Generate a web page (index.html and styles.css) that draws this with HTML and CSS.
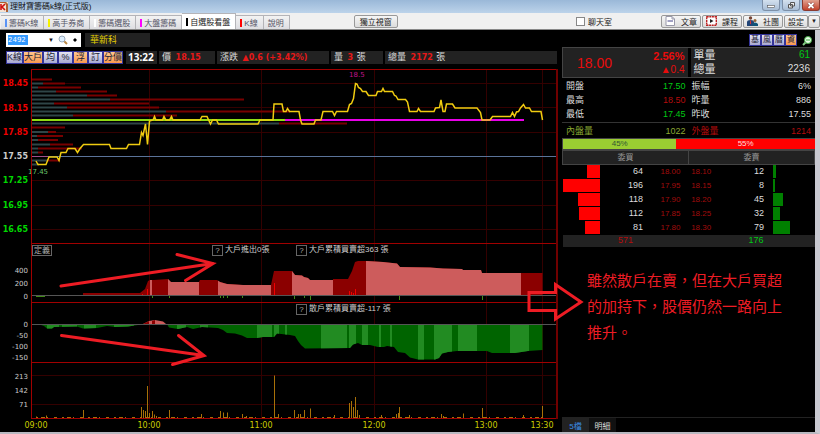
FILE: index.html
```
<!DOCTYPE html>
<html lang="zh-Hant">
<head>
    <meta charset="UTF-8">
    <meta name="viewport" content="width=device-width, initial-scale=1.0">
    <title>理財寶籌碼k線(正式版)</title>
    <link rel="stylesheet" href="styles.css">
</head>
<body>
    <header class="titlebar">
        <svg class="app-icon" viewBox="0 0 8 10"><rect width="8" height="10" fill="#f4e4d4"/><path d="M0 0H6L8 2V10H6V3L5 1H0z" fill="#b06030"/><path d="M1 2V8M5 2L2 5L5 8" stroke="#d01010" stroke-width="1.6" fill="none"/></svg>
        <h1>理財寶籌碼k線(正式版)</h1>
        <div class="window-buttons">
            <button aria-label="最小化"><svg viewBox="0 0 16 10"><rect x="4.5" y="5.5" width="7" height="2" fill="#fff" stroke="#555" stroke-width=".6"/></svg></button>
            <button aria-label="還原"><svg viewBox="0 0 16 10"><path d="M7.5 2.500H11.500V6H7.500zM5.500 4.500H9.500V8H5.500z" fill="#eee" stroke="#555"/></svg></button>
            <button class="close" aria-label="關閉"><svg viewBox="0 0 16 10"><path d="M5.500 3L10.500 8M10.500 3L5.500 8" stroke="#733" stroke-width="3"/><path d="M5.500 3L10.500 8M10.500 3L5.500 8" stroke="#fff" stroke-width="1.800"/></svg></button>
        </div>
    </header>

    <nav class="tabbar">
        <button class="tab"><i class="mark blue"></i>籌碼K線</button>
        <button class="tab"><i class="mark yellow"></i>高手券商</button>
        <button class="tab"><i class="mark white"></i>籌碼選股</button>
        <button class="tab"><i class="mark magenta"></i>大盤籌碼</button>
        <button class="tab active"><i class="mark black"></i>自選股看盤</button>
        <button class="tab"><i class="mark red"></i>K線</button>
        <button class="tab">說明</button>
        <button class="btn detach">獨立視窗</button>
        <div class="tabbar-right">
            <label class="chat"><input type="checkbox">聊天室</label>
            <button class="btn"><svg viewBox="0 0 11 10"><path d="M1 .5H7L9.500 3V9.500H1z" fill="#fff" stroke="#99a"/><path d="M7 .5V3H9.500" fill="none" stroke="#99a"/><path d="M2.500 5H8" stroke="#448"/></svg>文章</button>
            <button class="btn"><svg viewBox="0 0 11 10"><rect x=".7" y=".7" width="9.600" height="8.600" fill="#fff" stroke="#b22" stroke-width="1.400" stroke-dasharray="2 .6"/><path d="M4 3L7.500 5L4 7z" fill="#222"/></svg>課程</button>
            <button class="btn"><svg viewBox="0 0 11 10"><circle cx="3.500" cy="2" r="1.700" fill="#743"/><path d="M0 10V6Q0 4 3.500 4T7 6V10z" fill="#247"/><path d="M3.500 4.500V8" stroke="#d33"/><circle cx="8" cy="4.500" r="1.500" fill="#963"/><path d="M5.500 10V8Q6 6.500 8 6.500T11 8V10z" fill="#157"/></svg>社團</button>
            <div class="split">
                <button class="btn">設定</button>
                <button class="btn caret" aria-label="更多設定">▼</button>
            </div>
        </div>
    </nav>

    <main class="workspace">
        <section class="left">
            <div class="search-row">
                <div class="search-box">
                    <input type="text" value="2492" aria-label="股票代號">
                    <button class="drop" aria-label="展開">▼</button>
                    <button aria-label="搜尋"><svg viewBox="0 0 10 10"><path d="M6 6L9 9" stroke="#b84" stroke-width="2"/><circle cx="4" cy="4" r="3" fill="#dff0ff" stroke="#9ab"/></svg></button>
                    <button aria-label="新增"><svg viewBox="0 0 10 10"><path d="M5 3L7 5L5 7L3 5z"/></svg></button>
                </div>
                <div class="stock-name">華新科</div>
            </div>
            <div class="quote-row">
                <div class="toggles">
                    <button>K線</button><button class="on">大戶</button><button>均</button><button>%</button><button class="on">浮</button><button>訂</button><button class="on">分價</button>
                </div>
                <div class="cell time">13:22</div>
                <div class="cell price">價 <b>18.15</b></div>
                <div class="cell change">漲跌 <b>▲0.6 (+3.42%)</b></div>
                <div class="cell lot">量 <b>3</b> 張</div>
                <div class="cell total">總量 <b>2172</b> 張</div>
            </div>

            <svg class="chart" viewBox="0 66 562 366" aria-label="分時走勢">
                <defs>
                    <clipPath id="bigArea"><path d="M45 296V295H83V293H140L145 289L148 281L150 280H154L168 279L171 282H199L200 280H217L220 282L227 284L243 285H271L274 271H292L295 275L302 275.500L304 277L308 278L310 280H333V279H348L352 271L353 268L355 262L358 261H367L383 262L397 263.500L400 267L430 267.500L443 268.500L462 269L463 270H481L482 273H542.500V296z"/></clipPath>
                    <clipPath id="smallArea"><path d="M38 324L44 326L47 328.500H52L54 327L77 326.500L83 328.500L97 328L107 326L115 327L128 326.500L138 325L140 324H167L169 327.500L178 329L187 327L193 329L202 327L218 328L223 330L227 333L235 333.500L242 335.500L247 338H257L263 337H274L277 333.500L290 335L295 336L298 341L301 345L305 348.500L350 348L353 344.500L358 343L362 345H370L378 347H384L387 346L394 347L398 352L405 353L410 357.500L418 359.500H435L439 358L442 353.500L448 352L457 351H487L492 353H515L528 351L542.500 350V324z"/></clipPath>
                </defs>

                <!-- 格線 -->
                <path class="grid" d="M31 83.500H557M31 107.500H557M31 132.500H557M31 180.500H557M31 205.500H557M31 229.500H557M31 375.500H557M31 404.500H557M149.500 69V418M261.500 69V418M374.500 69V418M486.500 69V418M542.500 69V418"/>

                <!-- 分價量 -->
                <path class="vol-red" d="M31 79.500H52M43 83.500H65M38 87.500H81M56 91.500H107M87 95.500H117M110 99.500H244M54 103.500H149M67 107.500H159M166 111.500H290M73 115.500H177M279 123.500H347M31 127.500H65M48 132H56M37 136H63M38 140H58M50 144.500H73M38 148.500H82M38 152.500H43M47 160.500H60"/>
                <path class="vol-grey" d="M31 83.500H43M31 87.500H38M31 91.500H56M31 95.500H87M31 99.500H110M31 103.500H54M31 107.500H67M31 111.500H166M31 115.500H73M31 123.500H279M31 132H48M31 136H37M31 140H38M31 144.500H50M31 148.500H38M31 152.500H38M31 160.500H47M31 164.500H39"/>
                <path class="base" d="M31 156.500H557"/>
                <path d="M31 156.500H48" stroke="#a0508c"/>
                <path d="M31 120H285" stroke="#8fdc14" stroke-width="2"/>
                <path d="M285 120H524" stroke="#e800e8" stroke-width="2"/>

                <!-- 價格線 -->
                <polyline class="price-line" points="36,161 38,164.500 46,164.500 49,157 57,157 59,160.500 61,152.500 66,152.500 68,148.500 75,148.500 77.500,152.500 80,148.500 83.500,144.500 109.500,144.500 111,148.500 126.500,148.500 128.500,144.500 139.500,144.500 141.500,132.500 143,135.500 145.500,124 147.500,144.500 149.500,121 153,120 154.500,116.500 156,120 162.500,120 164,116.500 166,120 169.500,120 171.500,116.500 173,120 200,120 202,116.500 207,116.500 210.500,124 212.500,120 216.500,120 218.500,124 258,124 260,120 273,120 274,104 282,104 283.500,111.500 286,111.500 287.500,108.500 289.500,111.500 299,111.500 300.500,120 302,124 314,124 315.500,120 321,120 323,111.500 332.500,111.500 334.500,115.500 336.500,111.500 347.500,111.500 349.500,104.500 351.500,103.500 353.500,98.500 355.500,83.500 357,84 358.500,87.500 360.500,88.500 362.500,91.500 366,91.500 368.500,95.500 376,95.500 377.500,91.500 381.500,91.500 383,88.500 384.500,91.500 392.500,91.500 394.500,95.500 396,96 398,99.500 405.500,99.500 407.500,102 409.500,111.500 417,111.500 418.500,108.500 420.500,111.500 434,111.500 435.500,108 439.500,107.500 441,100 443,111.500 445,111.500 446.500,104 452.500,104 455,108 477,108 480.500,112.500 482,120 490,120 492.500,116.500 510.500,116.500 512.500,112.500 514.500,116.500 516.500,112 518.500,111.500 520.500,108 523.500,104.500 525.500,108 529.500,108 531.500,111.500 541,111.500 542.500,120"/>
                <text x="349" y="77" class="small hi">18.5</text>
                <text x="28" y="174" class="small lo">17.45</text>

                <!-- 大戶 -->
                <g clip-path="url(#bigArea)">
                    <rect x="31" y="255" width="512" height="41" fill="#8b0000"/>
                    <path fill="#cd5c5c" d="M150 255h2v41h-2zM168 255h31v41h-31zM218 255h53v41h-53zM292 255h41v41h-41zM366 255h155v41h-155z"/>
                </g>
                <path stroke="#f00000" d="M142.500 296V294M147.500 296V289M274.500 296V283M349.500 296V291M351.500 296V292M353.500 296V293M355.500 296V289"/>
                <path stroke="#3f8a16" d="M36 296.500H45M152.500 296V298M169.500 296V298M220.500 296V298M223.500 296V298M227.500 296V298M242.500 296V298M294.500 296V299M304.500 296V298M310.500 296V300M399.500 296V300M482.500 296V300"/>
                <path class="zero" d="M31 295.500H557"/>

                <!-- 散戶 -->
                <path d="M143 324L149 321L155 320L163 321.500L166 324z" fill="#cd5c5c"/>
                <path d="M143 324L149 321V324zM152 324V321L155 320V324z" fill="#8b0000"/>
                <g clip-path="url(#smallArea)">
                    <rect x="31" y="324" width="512" height="37" fill="#006400"/>
                    <path fill="#228b22" d="M47 324h12v37h-12zM62 324h15v37h-15zM84 324h12v37h-12zM114 324h20v37h-20zM177 324h9v37h-9zM200 324h8v37h-8zM257 324h15v37h-15zM274 324h5v37h-5zM285 324h2v37h-2zM321 324h26v37h-26zM349 324h7v37h-7zM362 324h6v37h-6zM379 324h2v37h-2zM390 324h2v37h-2zM418 324h6v37h-6zM434 324h18v37h-18zM458 324h19v37h-19zM510 324h19v37h-19z"/>
                </g>
                <path class="zero" d="M31 324.500H557"/>

                <!-- 成交量 -->
                <path class="volume" d="M36.500 418V416.500M46.500 418V415.500M83.500 418V410M141.500 418V407M143.500 418V410M145.500 418V411M147.500 418V386M149.500 418V413M152.500 418V411M154.500 418V414.500M156.500 418V416M169.500 418V410M201.500 418V414M220.500 418V411M223.500 418V412.500M227.500 418V412.500M242.500 418V414M246.500 418V416M274.500 418V375.500M278.500 418V414M294.500 418V410M298.500 418V414M300.500 418V414M304.500 418V410M310.500 418V408.500M334.500 418V415M349.500 418V403M351.500 418V401M353.500 418V407M355.500 418V397M357.500 418V410M359.500 418V415M381.500 418V415M396.500 418V414M398.500 418V413M399.500 418V407M409.500 418V415M441.500 418V414M443.500 418V416M463.500 418V413.500M482.500 418V408M523.500 418V415M542.500 418V406"/>
                <path d="M36 417.500H542" stroke="#a87008" stroke-dasharray="2 3 4 2 1 6 3 5"/>

                <!-- 外框 -->
                <path class="frame" d="M31.500 69.500V418.500M31 69.500H557M31 243.500H557M31 302.500H557M31 362.500H557M31 418.500H557"/>
                <path d="M557 69V419" stroke="#700000" stroke-width="2"/>

                <g class="price-axis">
                    <text x="28" y="86" class="up">18.45</text>
                    <text x="28" y="111" class="up">18.15</text>
                    <text x="28" y="135" class="up">17.85</text>
                    <text x="28" y="159">17.55</text>
                    <text x="28" y="183" class="down">17.25</text>
                    <text x="28" y="208" class="down">16.95</text>
                    <text x="28" y="232" class="down">16.65</text>
                </g>
                <g class="axis">
                    <text x="28" y="273">400</text>
                    <text x="28" y="286">200</text>
                    <text x="28" y="299">0</text>
                    <text x="28" y="327">0</text>
                    <text x="28" y="338">-50</text>
                    <text x="28" y="349">-100</text>
                    <text x="28" y="360">-150</text>
                    <text x="28" y="379">213</text>
                    <text x="28" y="393">142</text>
                    <text x="28" y="407">71</text>
                </g>
                <g class="time-axis">
                    <text x="36" y="428">09:00</text>
                    <text x="149" y="428">10:00</text>
                    <text x="261" y="428">11:00</text>
                    <text x="374" y="428">12:00</text>
                    <text x="486" y="428">13:00</text>
                    <text x="542" y="428">13:30</text>
                </g>

                <foreignObject x="32" y="245" width="20" height="11"><button class="chart-btn">定義</button></foreignObject>
                <foreignObject x="212" y="245" width="11" height="11"><button class="chart-btn">?</button></foreignObject>
                <foreignObject x="296" y="245" width="11" height="11"><button class="chart-btn">?</button></foreignObject>
                <foreignObject x="296" y="304" width="11" height="11"><button class="chart-btn">?</button></foreignObject>
                <g class="caption">
                    <text x="225" y="252">大戶進出0張</text>
                    <text x="309" y="252">大戶累積買賣超363 張</text>
                    <text x="309" y="311">散戶累積買賣超-117 張</text>
                </g>

                <!-- 標註箭頭 -->
                <g class="arrows">
                    <path d="M61 286L213 263.500M177 254.500L213 263.500L185.500 280.500"/>
                    <path d="M61.500 335.500L204 355.500M178.500 335.500L204 355.500L172.500 364.500"/>
                    <path d="M529 292.500H555.500V284.500L581 302L555.500 319V310.500H529z"/>
                </g>
            </svg>
        </section>

        <aside class="right">
            <div class="side-tools">
                <div class="toggles small-toggles">
                    <button>基</button><button>風</button><button>曆</button><button class="on">資</button>
                </div>
                <button class="find" aria-label="查詢"><svg viewBox="0 0 10 10"><path d="M4 6L1 9" stroke="#8c8" stroke-width="2"/><circle cx="6" cy="4" r="3.500" fill="#e8ffe8" stroke="#4a4"/><path d="M4 4H8" stroke="#4a4"/></svg></button>
            </div>

            <div class="summary">
                <div class="last">
                    <strong>18.00</strong>
                    <div class="diff"><b>2.56%</b><span>▲0.4</span></div>
                </div>
                <dl class="vols">
                    <div><dt>單量</dt><dd class="down">61</dd></div>
                    <div><dt>總量</dt><dd>2236</dd></div>
                </dl>
            </div>

            <dl class="stats">
                <div><dt>開盤</dt><dd class="down">17.50</dd></div>
                <div><dt>振幅</dt><dd>6%</dd></div>
                <div><dt>最高</dt><dd class="dim-up">18.50</dd></div>
                <div><dt>昨量</dt><dd>886</dd></div>
                <div><dt>最低</dt><dd class="down">17.45</dd></div>
                <div><dt>昨收</dt><dd>17.55</dd></div>
            </dl>
            <dl class="stats inout">
                <div class="inner"><dt>內盤量</dt><dd>1022</dd></div>
                <div class="dim-up"><dt>外盤量</dt><dd>1214</dd></div>
            </dl>

            <div class="ratio">
                <span class="ratio-in" style="width: 45%">45%</span>
                <span class="ratio-out" style="width: 55%">55%</span>
            </div>

            <table class="depth">
                <colgroup><col class="c-bar"><col class="c-vol"><col class="c-bid"><col class="c-ask"><col class="c-askvol"><col></colgroup>
                <thead>
                    <tr><th colspan="3">委買</th><th colspan="3">委賣</th></tr>
                </thead>
                <tbody>
                    <tr><td><i class="bid" style="width: 34%"></i></td><td>64</td><td class="p">18.00</td><td class="p">18.10</td><td>12</td><td><i class="ask" style="width: 6%"></i></td></tr>
                    <tr><td><i class="bid" style="width: 100%"></i></td><td>196</td><td class="p">17.95</td><td class="p">18.15</td><td>8</td><td><i class="ask" style="width: 4%"></i></td></tr>
                    <tr><td><i class="bid" style="width: 60%"></i></td><td>118</td><td class="p">17.90</td><td class="p">18.20</td><td>45</td><td><i class="ask" style="width: 23%"></i></td></tr>
                    <tr><td><i class="bid" style="width: 57%"></i></td><td>112</td><td class="p">17.85</td><td class="p">18.25</td><td>32</td><td><i class="ask" style="width: 16%"></i></td></tr>
                    <tr><td><i class="bid" style="width: 41%"></i></td><td>81</td><td class="p">17.80</td><td class="p">18.30</td><td>79</td><td><i class="ask" style="width: 40%"></i></td></tr>
                </tbody>
                <tfoot>
                    <tr><td colspan="3" class="dim-up">571</td><td colspan="3" class="down">176</td></tr>
                </tfoot>
            </table>

            <p class="note">雖然散戶在賣，但在大戶買超<br>的加持下，股價仍然一路向上<br>推升。</p>

            <div class="bottom-tabs">
                <button class="active">5檔</button><button>明細</button>
            </div>
        </aside>
    </main>
</body>
</html>
```

FILE: styles.css
```
* {
    margin: 0;
    padding: 0;
    box-sizing: border-box;
}

body {
    font-family: "Liberation Sans", "Noto Sans CJK TC", sans-serif;
    min-height: 100vh;
    display: flex;
    flex-direction: column;
    background: #000;
    color: #ddd;
    font-size: 9px;
}

button {
    font: inherit;
    color: inherit;
    background: none;
    border: none;
    cursor: pointer;
    white-space: nowrap;
}

/* 標題列 */
.titlebar {
    display: flex;
    align-items: center;
    height: 13px;
    background: linear-gradient(#9ab8d8, #bcd3ea);
    color: #111;
}

.app-icon {
    width: 8px;
    height: 10px;
}

.titlebar h1 {
    margin-left: 2px;
    font-size: 8px;
    line-height: 12px;
    font-weight: normal;
}

.window-buttons {
    display: flex;
    gap: 2px;
    margin-left: auto;
    align-self: flex-start;
}

.window-buttons button {
    display: flex;
    width: 18px;
    height: 11px;
    border: 1px solid #7d90a8;
    border-top: none;
    border-radius: 0 0 3px 3px;
    background: linear-gradient(#d3e0ee, #a9bed6);
}

.window-buttons svg {
    width: 100%;
}

.window-buttons .close {
    background: linear-gradient(#e0a090, #c4422c);
    border-color: #8a3a30;
}

/* 分頁列 */
.tabbar {
    display: flex;
    align-items: stretch;
    height: 17px;
    padding-left: 1px;
    background: #f0f0f0;
    border-bottom: 1px solid #888;
    font-size: 8px;
    color: #222;
}

.tab {
    display: flex;
    align-items: center;
    gap: 2px;
    margin-top: 2px;
    padding: 0 5px 0 4px;
    background: linear-gradient(#f3f3f3, #dedee2);
    border: 1px solid #b4b4b8;
    border-width: 1px 1px 0 0;
    color: #556;
}

.tab.active {
    margin-top: 0;
    background: #fff;
    color: #222;
}

.mark {
    width: 2px;
    height: 8px;
}

.blue { background: #5b93f5; }
.yellow { background: #f5f000; }
.white { background: #fff; }
.magenta { background: #f0f; }
.black { background: #000; }
.red { background: #f00; }

.btn {
    display: flex;
    align-items: center;
    gap: 5px;
    height: 13px;
    padding: 0 3px;
    border: 1px solid #999;
    border-radius: 2px;
    background: linear-gradient(#f6f6f6, #dcdcdc);
}

.btn svg {
    width: 11px;
    height: 10px;
}

.detach {
    margin: 2px 0 0 64px;
    padding: 0 5px;
}

.tabbar-right {
    display: flex;
    align-items: center;
    gap: 1px;
    margin-left: auto;
}

.chat {
    display: flex;
    align-items: center;
    gap: 3px;
    margin-right: 48px;
}

.chat input {
    appearance: none;
    width: 9px;
    height: 9px;
    border: 1px solid #888;
    background: #fff;
}

.chat input:checked {
    background: #5b93f5;
}

.split {
    display: flex;
}

.btn.caret {
    padding: 0 2px;
    font-size: 6px;
}

/* 主畫面 */
.workspace {
    flex: 1;
    display: grid;
    grid-template-columns: minmax(0, 562fr) minmax(0, 253fr);
    border-right: 5px solid #c9c9d1;
    border-bottom: 2px solid #b8b8c0;
}

.left {
    position: relative;
    z-index: 1;
    padding-top: 3px;
}

.search-row {
    display: flex;
    gap: 4px;
    height: 14px;
    padding-left: 6px;
}

.search-box {
    display: flex;
    align-items: center;
    width: 75px;
    padding-left: 2px;
    background: #fff;
    color: #111;
}

.search-box input {
    width: 20px;
    height: 10px;
    margin-right: auto;
    border: none;
    outline: none;
    background: #3399ff;
    color: #fff;
    font-family: "DejaVu Sans", sans-serif;
    font-size: 7px;
}

.search-box button {
    display: flex;
    justify-content: center;
    width: 12px;
    font-size: 6px;
}

.search-box svg {
    width: 10px;
    height: 10px;
}

.stock-name {
    width: 65px;
    padding-left: 5px;
    background: #222;
    color: #e6d200;
    line-height: 14px;
}

.quote-row {
    display: flex;
    gap: 2px;
    height: 13px;
    margin: 4px 5px 2px 6px;
    line-height: 13px;
}

.toggles {
    display: flex;
    margin-right: 1px;
}

.toggles button {
    min-width: 15px;
    height: 13px;
    padding: 0 1px;
    border: 1px solid #34349a;
    background: linear-gradient(#e4e4f2, #a8a8d0);
    color: #223;
    font-size: 8px;
    line-height: 11px;
}

.quote-row .toggles button {
    font-size: 9px;
    padding: 0;
}

.toggles .on {
    background: linear-gradient(#ffc890, #f89850);
}

.cell {
    background: #222;
    padding-left: 3px;
    white-space: pre;
}

.cell b {
    margin: 0 1px 0 2px;
    color: #e81818;
    font-family: "DejaVu Sans", sans-serif;
    font-size: 8px;
}

.time {
    width: 31px;
    padding-left: 2px;
    font-family: "Noto Sans", sans-serif;
    font-size: 10px;
    font-weight: bold;
    color: #fff;
}

.price { width: 56px; }
.change { width: 112px; }
.lot { width: 52px; }
.total { flex: 1; }

/* 走勢圖 */
.chart {
    display: block;
    width: 100%;
    height: auto;
    overflow: visible;
    fill: none;
}

.chart text {
    fill: #ccc;
    font-family: "DejaVu Sans", "Noto Sans CJK TC", sans-serif;
    font-size: 7px;
}

.grid { stroke: #340000; }
.frame { stroke: #a00000; }
.base { stroke: #5a7399; }
.zero { stroke: #555; }
.vol-red { stroke: #780000; stroke-width: 2; }
.vol-grey { stroke: #2f4547; stroke-width: 2; }
.volume { stroke: #a87008; }

.price-line {
    stroke: #f0cc10;
    stroke-width: 1.5;
}

.chart .hi { fill: #c0148c; }
.chart .lo { fill: #6cc86c; }

.chart .price-axis text {
    text-anchor: end;
    font-size: 8px;
    font-weight: bold;
}

.chart .price-axis .up { fill: #f00000; }
.chart .price-axis .down { fill: #00d800; }

.axis text {
    text-anchor: end;
}

.chart .time-axis text {
    text-anchor: middle;
    font-size: 8px;
    fill: #cccc00;
}

.chart .caption text {
    font-family: "Liberation Sans", "Noto Sans CJK TC", sans-serif;
    font-size: 8px;
}

.chart-btn {
    display: block;
    width: 100%;
    height: 11px;
    border: 1px solid #666;
    background: #000;
    color: #aaa;
    font-size: 8px;
    line-height: 9px;
}

.arrows {
    stroke: #ed1c24;
    stroke-width: 3;
    stroke-linecap: round;
}

/* 右側報價 */
.right {
    display: flex;
    flex-direction: column;
}

.side-tools {
    display: flex;
    justify-content: flex-end;
    gap: 4px;
    height: 17px;
    padding: 4px 3px 0 0;
}

.small-toggles button {
    width: 12px;
    min-width: 0;
    height: 12px;
    padding: 0;
    line-height: 10px;
}

.find svg {
    display: block;
    width: 10px;
    height: 10px;
}

.down { color: #00c814; }
.dim-up { color: #b40c0c; }
.inner { color: #8aa832; }

.summary {
    display: grid;
    grid-template-columns: 1fr 1fr;
    gap: 3px;
    height: 31px;
    border: 1px solid #444;
    border-right: none;
    background: #000;
}

.last,
.vols {
    background: #222;
}

.last {
    display: flex;
    align-items: center;
    justify-content: space-between;
    padding: 0 3px 0 14px;
    color: #e80c0c;
}

.last strong {
    font-size: 14px;
    font-weight: normal;
}

.diff {
    display: flex;
    flex-direction: column;
    align-items: flex-end;
    line-height: 14px;
}

.diff b {
    font-size: 11px;
}

.diff span {
    font-size: 10px;
}

.vols div,
.stats div {
    display: flex;
    justify-content: space-between;
}

.vols div {
    padding: 0 5px 0 3px;
    font-size: 10px;
    line-height: 14px;
}

.vols dt {
    font-size: 11px;
}

.stats {
    display: grid;
    grid-template-columns: 1fr 1fr;
    padding: 1px 4px;
    column-gap: 6px;
    line-height: 14px;
}

.inout {
    border-top: 1px solid #333;
    padding-bottom: 0;
}

.ratio {
    display: flex;
    height: 12px;
    border: 1px solid #444;
    border-right: none;
    font-size: 8px;
    line-height: 10px;
    text-align: center;
}

.ratio-in {
    background: #9acd32;
    color: #353;
}

.ratio-out {
    background: #f00;
    color: #fdd;
}

.depth {
    width: 100%;
    table-layout: fixed;
    border-collapse: collapse;
}

.c-bar { width: 15%; }
.c-vol { width: 17%; }
.c-bid { width: 18%; }
.c-ask { width: 9%; }
.c-askvol { width: 21%; }

.depth th {
    height: 14px;
    border: 1px solid #444;
    background: #222;
    color: #999;
    font-size: 8px;
    font-weight: normal;
    line-height: 12px;
}

.depth td {
    height: 14px;
    text-align: right;
    line-height: 13px;
}

.depth .p {
    color: #a00c0c;
    font-size: 8px;
}

.depth td:nth-child(3) {
    padding-right: 8px;
}

.depth td:last-child {
    padding-left: 9px;
}

.bid,
.ask {
    display: block;
    height: 13px;
}

.bid {
    margin-left: auto;
    background: #f00;
}

.ask {
    background: #008000;
}

.depth tfoot td {
    height: 12px;
    padding: 0;
    background: #222;
    text-align: center;
    line-height: 11px;
}

.note {
    margin: 20px 0 0 25px;
    color: #ed1c24;
    font-family: "Noto Sans CJK TC", sans-serif;
    font-size: 15px;
    line-height: 26px;
    white-space: nowrap;
}

.bottom-tabs {
    display: flex;
    margin-top: auto;
    border-top: 1px solid #222;
}

.bottom-tabs button {
    width: 27px;
    height: 14px;
    background: #111;
    font-size: 8px;
}

.bottom-tabs .active {
    background: #222;
    color: #3a8ee6;
}
```
